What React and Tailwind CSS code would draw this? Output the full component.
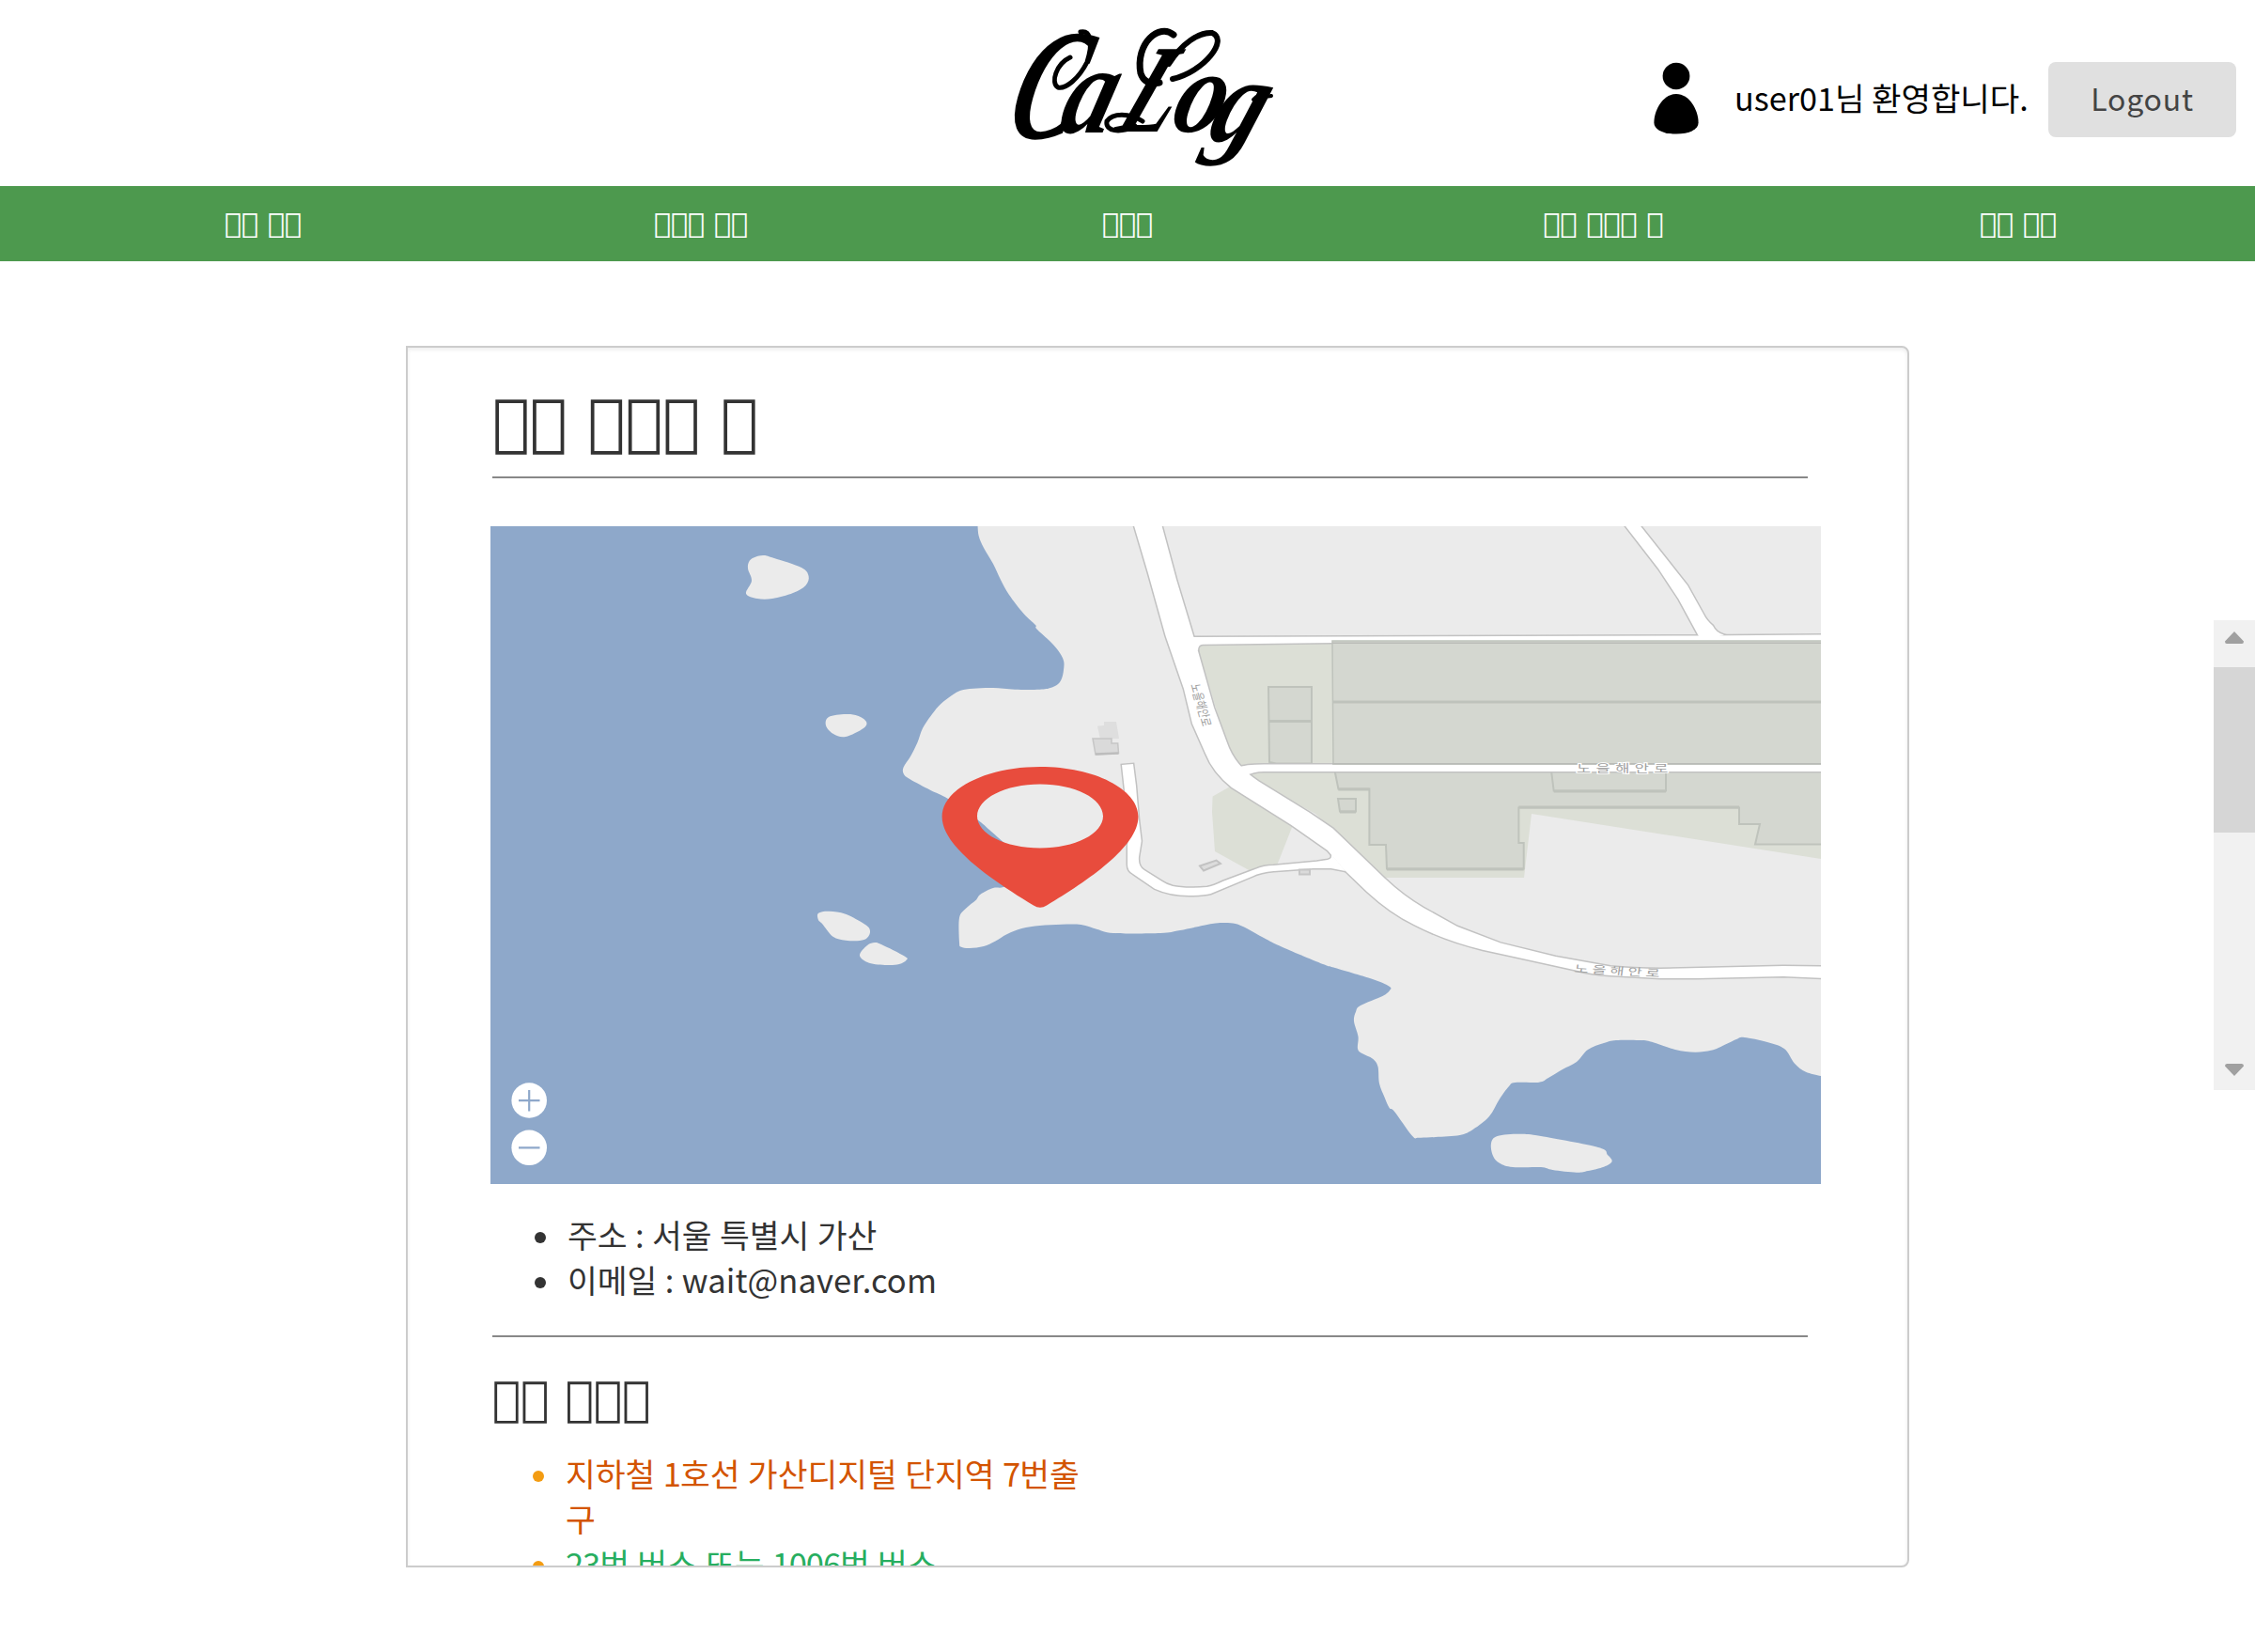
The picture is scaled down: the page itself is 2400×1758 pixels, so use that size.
const SEA = "#8ea8ca";
const LAND = "#ebebeb";
const GREEN = "#dcdfd6";
const BUILDING = "#d4d7d0";
const EDGE = "#bfc3bc";

// Catmull-Rom smoothing of a polyline, written as cubic Béziers.
function curve(list, closed = false) {
  const p = list.trim().split(/\s+/).map((s) => s.split(",").map(Number));
  const n = p.length;
  const at = (i) => (closed ? p[(i + n) % n] : p[Math.max(0, Math.min(n - 1, i))]);
  let d = `M${p[0][0]} ${p[0][1]}`;
  const end = closed ? n : n - 1;
  for (let i = 0; i < end; i++) {
    const [a, b, c, e] = [at(i - 1), at(i), at(i + 1), at(i + 2)];
    d += `C${b[0] + (c[0] - a[0]) / 6} ${b[1] + (c[1] - a[1]) / 6} ${c[0] - (e[0] - b[0]) / 6} ${c[1] - (e[1] - b[1]) / 6} ${c[0]} ${c[1]}`;
  }
  return d + (closed ? "Z" : "");
}

const COAST =
  "1040.4,556 1041.6,570 1047,583 1057,600 1065,617 1074,633 1089.5,653 1102,665 1103,669 1116,681 1126,692 1132,703 1132,713 1130,722 1126,728 1118,732 1106.6,733.7 1080,733.7 1057,732 1036,732.7 1022.5,734.7 1013,740 1001.4,749 992,760 982,775 976.5,790 969,805 961.5,816.7 962,824 969,829.5 990,840.7 1009,850 1040,872 1053,883 1066.5,895 1092,918 1084,936 1068,944 1057,945 1043.5,951.7 1038.5,958 1028,966.7 1021,976.7 1021,1003 1023,1007.7 1032,1009 1047,1007 1059,1001.7 1072,994 1087.5,988 1106.6,985 1129.6,983.7 1150.7,984 1168,989 1185,993 1235,993 1256,990 1290,983 1304,982 1315,983 1327,988 1345,998 1365,1008 1408,1026 1421,1030 1463,1042.7 1479,1050 1479,1054 1471.5,1060 1448,1070 1443,1076.7 1441,1086.7 1445.5,1103 1445,1116 1449.7,1121 1461,1126.7 1466.5,1135 1468,1153 1473.7,1168 1478.7,1179 1484,1182.7 1503,1208.7 1510,1210.7 1528,1210 1553.6,1208 1568,1201.7 1585,1188 1595.7,1170 1606,1156 1612.5,1152 1638,1151.7 1648,1147 1663,1138 1678,1130 1690,1117 1707,1110 1720,1107 1745,1107 1758,1108.7 1783,1117 1804,1119.7 1821,1117.7 1829,1115 1848,1106 1856.6,1104 1880,1108.7 1899,1116 1910,1131.7 1922,1140.7 1940,1145.5";

const ISLANDS = [
  "794,631.7 800,618 796,605 797.7,596.7 804,592.7 813,591 824,594 853,604 860.6,613 857.5,623 844,631 822,637 806,637",
  "900,760 913,761.7 922,768 919,775 900,784 887,781 879,772 882,763",
  "871,971.7 882.7,969.7 900,972.7 921,984 926,990.7 923,998 915,1001 900,1000.7 886.5,996.7 875,983 871,979",
  "915,1016.7 923,1006 931,1003 938,1005 963,1017.7 964.6,1021.7 957,1026 944,1027 925,1024.7",
  "1587,1216.7 1593.6,1209 1617,1206.7 1640,1209 1701,1221 1711,1229 1715.6,1236 1707,1241.7 1690,1246 1678,1247.7 1652.5,1245 1640,1242 1610,1242 1596,1237.7 1589,1230",
];

const ROADS = [
  "M1206 556L1222 610L1240.6 676.7L1260 733L1269 770L1283 801.7Q1291 822 1311 838L1374.5 878L1413 905L1430 925L1455 949Q1480 972 1505 984Q1538 1001 1578 1010.7L1675 1032Q1694 1037 1714 1038L1767 1041L1806 1041L1898 1039L1942 1041L1942 1028.6L1898 1028L1767 1031Q1738 1031 1714 1028.6L1655.6 1018L1597 1003.6L1551 986L1515 966Q1493 953 1474 935L1418.6 881.7L1394 865L1340 831.7Q1314 815 1305.7 790L1292 753L1275 693L1252 616.7L1235.6 556Z",
  "M1268 678L1808 676.5L1942 675.4L1942 683L1418 684L1280 685.7Q1275 686 1275 692L1268 690Z",
  "M1727 556L1765 605L1786.5 637.5L1808 677L1816 680L1835 675.7Q1826 673 1823 666Q1816 660 1813 653.6L1796 623L1743 556Z",
  "M1316 817Q1326 813.6 1345 813.6L1942 813.6L1942 821L1345 821Q1334 821 1325 826Z",
  "M1194 814L1198 850L1201.6 883L1200 900L1200 920Q1200 927 1206 930L1229 945.7Q1245 953 1265.5 953Q1281 953 1288.5 951L1332.5 932.7Q1342 928 1355.5 927L1397.6 924L1416.7 924L1432 927L1417 909Q1418 914 1413 915L1401.5 916.7L1355.5 921Q1345 921 1336 925L1302 937.7Q1291 943 1284.7 944Q1262 946 1248 943Q1241 941 1236.8 938L1217.7 926Q1211 922 1212 911.7L1214.7 895L1212 873L1209 836.7L1206 813Z",
];

function MapView() {
  return (
    <svg viewBox="522 560 1416 700" className="ml-[88px] mt-[51px] block h-[700px] w-[1416px] shrink-0">
      <rect x="522" y="560" width="1416" height="700" fill={SEA} />
      <path d={`${curve(COAST)}L1940 556Z`} fill={LAND} />
      {ISLANDS.map((d) => (
        <path key={d} d={curve(d, true)} fill={LAND} />
      ))}

      <g fill={GREEN}>
        <path d="M1273 684H1938V818H1322L1305 790Z" />
        <path d="M1326 821H1938V914L1630 866L1622 934H1474L1400 866L1330 828Z" />
        <path d="M1290.6 847.5L1311 836L1376 878L1359 921L1331 927L1293 906L1290 864Z" />
      </g>

      <g fill={BUILDING} stroke={EDGE} strokeWidth="2">
        <path d="M1350 731H1396V812.5H1358L1351 811Z" />
        <path d="M1420.5 820L1424.4 839.5H1457.4V899H1475L1476 924.5H1621.7V897H1616.4V859.5H1851V877H1873L1868 898.5H1942V820Z" />
        <path d="M1651 820L1653.7 841.5H1773V820" fill="none" />
        <path d="M1424 850H1443V863.5H1426Z" />
      </g>
      <g stroke={EDGE} strokeWidth="3" fill="none">
        <path d="M1350 767.5H1396M1424.4 840H1457.4M1476 925H1621.7M1653.7 842H1773M1616.4 859H1851M1426 864H1443" />
      </g>

      <g fill="none" stroke="#c2c2c2" strokeWidth="3">
        {ROADS.map((d) => (
          <path key={d} d={d} />
        ))}
      </g>
      <g fill="#ffffff">
        {ROADS.map((d) => (
          <path key={d} d={d} />
        ))}
      </g>

      <path d="M1418 682H1940V813H1419Z" fill={BUILDING} stroke={EDGE} strokeWidth="1.5" />
      <path d="M1418 684.2H1940M1418 812.8H1940" stroke="#b9bbb7" strokeWidth="1.5" />
      <path d="M1419 747H1940" stroke={EDGE} strokeWidth="3" />

      <path d="M1168 772.7L1175 772V768H1188L1191 786L1171 786.7Z" fill="#dedede" />
      <path d="M1163 786H1183V791H1189.7L1190.5 801.5L1166 803Z" fill="#dadada" stroke="#c6c6c6" strokeWidth="1.5" />
      <path d="M1166 802.5L1190.5 801.5" stroke="#bdbdbd" strokeWidth="2.5" />
      <path d="M1277 921.5L1294.5 915.5L1299 919L1281 926.5Z" fill="#dcdcdc" stroke="#c2c2c2" strokeWidth="2" />
      <path d="M1383 925.5H1394V930.5H1383Z" fill="#dadada" stroke="#c6c6c6" strokeWidth="2" />

      <g fill="#a0a0a0" fontFamily='"Noto Sans CJK KR", sans-serif' fontSize="11">
        <text transform="translate(1267 728.5) scale(1.35 1) rotate(78)" fontSize="10" textLength="46">노을해안로</text>
        <text transform="translate(1678 821.5) scale(1.5 1)" textLength="65" stroke="#ffffff" strokeWidth="2" paintOrder="stroke">
          노을해안로
        </text>
        <text transform="translate(1675 1034.5) scale(1.5 1) rotate(5)" textLength="61">노을해안로</text>
      </g>

      <path
        fillRule="evenodd"
        fill="#e84c3d"
        d="M1107 816C1165 816 1211.5 840 1211.5 869C1211.5 901 1158 937 1114 963.5Q1107 968 1100 963.5C1056 937 1002.6 901 1002.6 869C1002.6 840 1049 816 1107 816ZM1107 834.4C1070 834.4 1040 849.6 1040 868.4S1070 902.4 1107 902.4S1174 887.2 1174 868.4S1144 834.4 1107 834.4Z"
      />

      <circle cx="563.2" cy="1171" r="18.8" fill="#ffffff" />
      <circle cx="563.2" cy="1221.3" r="18.8" fill="#ffffff" />
      <path d="M552 1171.2H574.5M563.2 1160V1182.4M552 1221.4H574.5" stroke={SEA} strokeWidth="2.2" />
    </svg>
  );
}

function Logo() {
  return (
    <svg viewBox="1060 10 320 180" className="h-[180px] w-[320px] overflow-visible" aria-label="CaLog">
      <g fontFamily='"Liberation Serif", serif' fontStyle="italic" fontWeight="700" fill="#000000">
        <text transform="translate(1067 147) skewX(-16) scale(0.64 1)" fontSize="168">C</text>
        <text transform="translate(1124 141) skewX(-16) scale(0.82 1)" fontSize="134">a</text>
        <text transform="translate(1184 140) skewX(-24) scale(0.68 1)" fontSize="134">L</text>
        <text transform="translate(1243 140) skewX(-16) scale(0.88 1)" fontSize="124">o</text>
        <text transform="translate(1282 150) skewX(-20) scale(0.88 1)" fontSize="126">g</text>
      </g>
      {/* swashes */}
      <g fill="none" stroke="#000000" strokeLinecap="round">
        <path d="M1150 34C1160 32 1164 44 1157 66C1148 84 1134 95 1126 93C1118 88 1124 68 1139 61" strokeWidth="5" />
        <path d="M1249 37C1234 24 1208 46 1214 78C1217 87 1224 90 1234 88" strokeWidth="7" />
        <path d="M1244 68C1258 46 1276 34 1290 35C1308 42 1282 76 1248 84" strokeWidth="6" />
        <path d="M1216 129C1202 120 1184 120 1178 129C1176 140 1192 142 1208 134" strokeWidth="5" />
        <path d="M1334 106C1340 98 1346 104 1353 102" strokeWidth="4" />
      </g>
    </svg>
  );
}

function Item({ dot, color, children }) {
  return (
    <li className="flex items-start">
      <span className={`mr-[23px] mt-[22px] h-3 w-3 shrink-0 rounded-full ${dot}`} />
      <span className={color}>{children}</span>
    </li>
  );
}

function Num({ children }) {
  return <span className="tracking-[-1.1px]">{children}</span>;
}

const NAV = ["\uE0F1\uE0F1 \uE0F1\uE0F1", "\uE0F1\uE0F1\uE0F1 \uE0F1\uE0F1", "\uE0F1\uE0F1\uE0F1", "\uE0F1\uE0F1 \uE0F1\uE0F1\uE0F1 \uE0F1", "\uE0F1\uE0F1 \uE0F1\uE0F1"];

export default function App() {
  return (
    <div className="relative h-[1758px] w-[2400px] overflow-hidden bg-white font-['Noto_Sans_CJK_KR',sans-serif]">
      <header className="flex h-[198px] bg-white">
        <div className="ml-[1060px] mt-[10px] w-[320px]">
          <Logo />
        </div>
        <div className="ml-[380px] mt-[66px] flex h-[80px] items-center">
          <svg viewBox="0 0 48 80" className="-mt-[3px] h-[80px] w-[48px]">
            <ellipse cx="24" cy="16" rx="14.4" ry="14.2" />
            <path d="M24 35C38 35 47.6 52 47.6 65.5C47.6 73 38 77.5 24 77.5S0.4 73 0.4 65.5C0.4 52 10 35 24 35Z" />
          </svg>
          <span className="-mt-[4px] ml-[38px] w-[334px] whitespace-nowrap text-[34.2px] text-black">user01님 환영합니다.</span>
          <button className="h-[80px] w-[200px] rounded-lg bg-[#e0e0e0] pb-1 text-[32px] tracking-[0.8px] text-[#444444]">Logout</button>
        </div>
      </header>

      <nav className="grid h-[80px] grid-cols-[560px_372px_536px_477px_406px] bg-[#4d994e] text-center font-['DejaVu_Sans',sans-serif] text-[30px] leading-[80px] text-white [word-spacing:0.5px]">
        {NAV.map((label, i) => (
          <span key={i}>{label}</span>
        ))}
      </nav>

      <main className="ml-[432px] mt-[90px] flex h-[1300px] w-[1600px] flex-col overflow-hidden rounded-r-lg border-2 border-[#cccccc] bg-white shadow-[inset_0_2px_4px_rgba(0,0,0,0.08)]">
        <h1 className="ml-[90px] mt-[29px] h-[108px] shrink-0 font-['DejaVu_Sans',sans-serif] text-[66.4px] leading-[100px] text-[#333333] [word-spacing:0.8px]">
          {"\uE0F1\uE0F1 \uE0F1\uE0F1\uE0F1 \uE0F1"}
        </h1>
        <hr className="ml-[90px] h-[2px] w-[1400px] shrink-0 border-0 bg-[#888888]" />
        <MapView />
        <ul className="ml-[135px] mt-[29px] shrink-0 text-[34.6px] leading-[48px] text-[#333333] [word-spacing:0.6px]">
          <Item dot="bg-[#333333]">주소 : 서울 특별시 가산</Item>
          <Item dot="bg-[#333333]">
            이메일 : <span className="tracking-[0.1px]">wait@naver.com</span>
          </Item>
        </ul>
        <hr className="ml-[90px] mt-[36px] h-[2px] w-[1400px] shrink-0 border-0 bg-[#888888]" />
        <h3 className="ml-[90px] mt-[26px] h-[80px] shrink-0 font-['DejaVu_Sans',sans-serif] text-[50.3px] leading-[80px] text-[#333333] [word-spacing:1.5px]">
          {"\uE0F1\uE0F1 \uE0F1\uE0F1\uE0F1"}
        </h3>
        <ul className="ml-[133px] mt-[14px] shrink-0 whitespace-nowrap text-[34.6px] leading-[48px]">
          <Item dot="bg-[#f39c12]" color="text-[#d35400] [word-spacing:0.6px]">
            지하철 <Num>1</Num>호선 가산디지털 단지역 <Num>7</Num>번출
            <br />구
          </Item>
          <Item dot="bg-[#f39c12]" color="text-[#27ae60] [word-spacing:0.4px]">
            <Num>23</Num>번 버스 또는 <Num>1006</Num>번 버스
          </Item>
        </ul>
      </main>

      <aside className="absolute right-0 top-[660px] flex h-[500px] w-[44px] flex-col bg-[#f1f1f1]">
        <div className="flex h-[50px] items-start justify-center pt-[12px]">
          <svg viewBox="0 0 20 13" className="h-[13px] w-[20px]"><path d="M10 0L20 10.5Q20 13 18 13H2Q0 13 0 10.5Z" fill="#a0a0a0" /></svg>
        </div>
        <div className="h-[176px] bg-[#d6d6d6]" />
        <div className="mt-auto flex h-[28px] items-start justify-center">
          <svg viewBox="0 0 20 13" className="h-[13px] w-[20px]"><path d="M10 13L20 2.5Q20 0 18 0H2Q0 0 0 2.5Z" fill="#a0a0a0" /></svg>
        </div>
      </aside>
    </div>
  );
}
